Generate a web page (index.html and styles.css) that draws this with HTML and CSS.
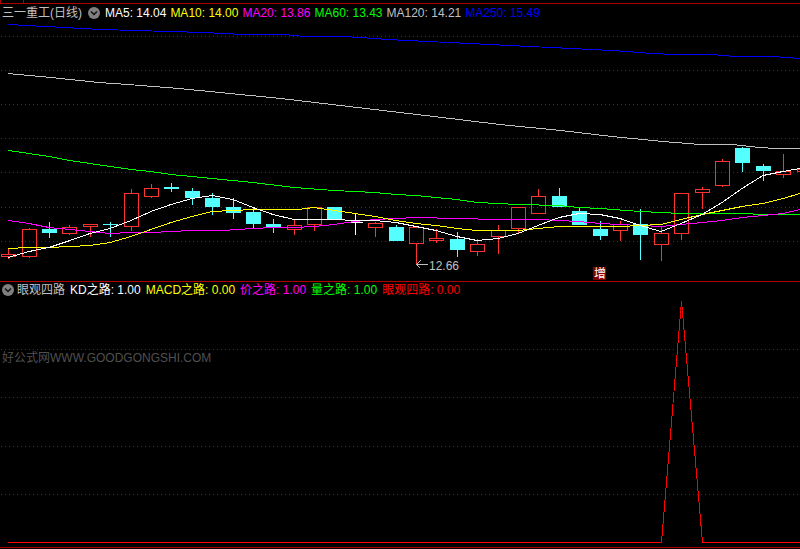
FILE: index.html
```html
<!DOCTYPE html>
<html lang="zh-CN">
<head>
    <meta charset="UTF-8">
    <meta name="viewport" content="width=device-width, initial-scale=1.0">
    <title>三一重工(日线)</title>
    <link rel="stylesheet" href="styles.css">
</head>
<body>
    <div class="top-strip"><span class="top-tab"></span></div>

    <section class="panel">
        <header class="panel-header main-header">
            <h1 class="name">三一重工(日线)</h1>
            <button class="toggle" type="button" aria-label="主图指标">
                <svg viewBox="0 0 12 12" width="12" height="12"><circle cx="6" cy="6" r="6"/><path d="M3 4.5l3 3 3-3"/></svg>
            </button>
            <span class="value white">MA5: 14.04</span>
            <span class="value yellow">MA10: 14.00</span>
            <span class="value magenta">MA20: 13.86</span>
            <span class="value green">MA60: 13.43</span>
            <span class="value silver">MA120: 14.21</span>
            <span class="value blue">MA250: 15.49</span>
        </header>
        <svg class="chart" viewBox="0 22 800 259">
            <g class="grid">
                <path d="M1 36.5H800M1 70.5H800M1 104.5H800M1 138.5H800M1 172.5H800M1 207.5H800M1 241.5H800"/>
            </g>
            <g id="candles"></g>
            <g class="lines">
                <polyline class="ma250" points="8,24.5 101,29.5 204,32.5 244,34.5 283,34.5 306,36.5 345,36.5 388,39.5 428,41.5 490,44.5 530,46.5 571,48.5 612,50.5 653,53.5 673,54.5 712,54.5 735,56.5 773,56.5 800,58.5"/>
                <polyline class="ma120" points="8,73.5 51,77.5 99,82.5 128,84.5 179,88.5 230,93.5 281,98.5 332,104.5 383,110.5 434,116.5 500,124.5 561,130.5 612,136.5 663,141.5 700,144.5 732,144.5 760,147.5 776,148.5 800,148.5"/>
                <polyline class="ma60" points="8,150.5 29,153.5 49,156.5 70,160.5 90,163.5 110,166.5 131,169.5 151,171.5 171,174.5 192,176.5 212,178.5 253,182.5 294,187.5 334,190.5 375,192.5 396,194.5 416,195.5 436,197.5 457,199.5 477,202.5 498,203.5 518,204.5 559,205.5 579,207.5 600,208.5 640,211.5 661,212.5 681,213.5 742,213.5 763,214.5 800,214.5"/>
                <polyline class="ma20" points="8,220.5 29,223.5 49,227.5 70,229.5 90,231.5 110,233.5 131,232.5 151,232.5 171,231.5 192,230.5 223,230.5 253,228.5 273,227.5 294,227.5 314,226.5 334,224.5 355,221.5 375,219.5 396,218.5 416,217.5 457,218.5 498,219.5 538,219.5 559,220.5 579,221.5 600,223.5 620,224.5 640,225.5 661,226.5 681,224.5 702,222.5 722,220.5 742,217.5 763,215.5 783,213.5 800,209.5"/>
                <polyline class="ma10" points="8,248.5 29,247.5 49,247.5 70,246.5 90,245.5 110,242.5 131,236.5 151,229.5 171,222.5 192,216.5 212,211.5 233,210.5 253,209.5 298,209.5 314,207.5 334,210.5 355,213.5 375,216.5 396,220.5 416,223.5 436,225.5 457,228.5 477,230.5 518,230.5 538,228.5 559,226.5 620,226.5 640,225.5 661,224.5 681,219.5 702,214.5 722,210.5 742,206.5 763,203.5 783,198.5 800,193.5"/>
                <polyline class="ma5" points="8,257.5 29,251.5 49,247.5 70,240.5 90,233.5 110,228.5 131,220.5 151,211.5 171,204.5 192,198.5 212,195.5 233,199.5 253,207.5 273,214.5 294,219.5 334,219.5 355,220.5 375,220.5 396,222.5 416,226.5 436,230.5 457,236.5 477,240.5 498,238.5 518,233.5 538,225.5 559,217.5 579,213.5 600,214.5 620,218.5 640,225.5 661,231.5 681,223.5 702,214.5 722,202.5 742,188.5 763,175.5 783,171.5 800,168.5"/>
            </g>
            <path class="arrow" d="M416 264.5h12M420.5 260.5l-4 4 4 4"/>
            <text class="low" x="429" y="270">12.66</text>
            <rect class="flag" x="593" y="267" width="13" height="13"/>
            <text class="flag-text" x="594" y="278">增</text>
        </svg>
    </section>

    <section class="panel sub-panel">
        <header class="panel-header sub-header">
            <button class="toggle" type="button" aria-label="副图指标">
                <svg viewBox="0 0 12 12" width="12" height="12"><circle cx="6" cy="6" r="6"/><path d="M3 4.5l3 3 3-3"/></svg>
            </button>
            <h2 class="name">眼观四路</h2>
            <span class="value white">KD之路: 1.00</span>
            <span class="value yellow">MACD之路: 0.00</span>
            <span class="value magenta">价之路: 1.00</span>
            <span class="value green">量之路: 1.00</span>
            <span class="value red">眼观四路: 0.00</span>
        </header>
        <svg class="chart" viewBox="0 300 800 247">
            <g class="grid">
                <path d="M1 349.5H800M1 397.5H800M1 446.5H800M1 494.5H800"/>
            </g>
            <polyline class="signal" points="8,542.5 661.5,542.5 681.5,301 702.5,542.5 800,542.5"/>
        </svg>
        <p class="watermark">好公式网WWW.GOODGONGSHI.COM</p>
    </section>

    <script src="chart.js"></script>
</body>
</html>
```

FILE: styles.css
```css
body {
    margin: 0;
    background-color: #000;
    color: #c0c0c0;
    font-family: "Liberation Sans", Arial, "Noto Sans CJK SC", sans-serif;
    font-size: 12px;
}

.top-strip {
    height: 3px;
    border-left: 1px solid #b00000;
    border-bottom: 1px solid #b00000;
}

.top-tab {
    display: block;
    width: 22px;
    height: 3px;
    border-right: 1px solid #b00000;
}

.panel {
    position: relative;
}

.sub-panel {
    border-top: 1px solid #b00000;
    border-bottom: 1px solid #b00000;
}

.panel-header {
    display: flex;
    align-items: center;
    box-sizing: border-box;
    height: 18px;
    padding-left: 2px;
    line-height: 16px;
    white-space: nowrap;
}

.main-header {
    gap: 4px;
}

.main-header .toggle {
    margin: 0 1px 0 2px;
}

.sub-header {
    gap: 5px;
    padding-bottom: 2px;
}

.sub-header .toggle {
    margin-right: -2px;
}

.name {
    margin: 0;
    font-size: 12px;
    font-weight: normal;
}

.toggle {
    display: flex;
    padding: 0;
    border: none;
    background: none;
    cursor: pointer;
}

.toggle circle {
    fill: #808080;
}

.toggle path {
    fill: none;
    stroke: #111;
    stroke-width: 1.5;
}

.white {
    color: #fff;
}

.yellow {
    color: #ff0;
}

.magenta {
    color: #f0f;
}

.green {
    color: #0f0;
}

.silver {
    color: #c0c0c0;
}

.blue {
    color: #00f;
}

.red {
    color: #f00;
}

.chart {
    display: block;
    width: 100%;
    shape-rendering: crispEdges;
}

.grid path {
    stroke: #b00000;
    stroke-dasharray: 1 3;
}

.lines polyline,
.signal,
.arrow {
    fill: none;
    stroke-width: 1;
}

.ma5 {
    stroke: #fff;
}

.ma10 {
    stroke: #ff0;
}

.ma20 {
    stroke: #f0f;
}

.ma60 {
    stroke: #0f0;
}

.ma120 {
    stroke: #c0c0c0;
}

.ma250 {
    stroke: #00f;
}

.signal {
    stroke: #f00;
}

.up {
    fill: none;
    stroke: #ff3232;
}

.down {
    fill: #54ffff;
}

.flat {
    fill: #fff;
}

.arrow {
    stroke: #c0c0c0;
}

.low {
    fill: #c0c0c0;
    font-size: 12px;
}

.flag {
    fill: #800000;
}

.flag-text {
    fill: #fff;
    font-size: 12px;
}

.watermark {
    position: absolute;
    top: 67px;
    left: 2px;
    margin: 0;
    color: #505050;
    line-height: 18px;
}
```

FILE: chart.js
```javascript
// x, high, body top, body bottom, low, type
const candles = [
    [8, 248, 254, 256, 258, "up"],
    [29, 228, 229, 256, 257, "up"],
    [49, 222, 229, 232, 237, "down"],
    [69, 225, 227, 233, 234, "up"],
    [90, 224, 224, 226, 236, "up"],
    [110, 222, 224, 224, 236, "down"],
    [131, 189, 193, 226, 230, "up"],
    [151, 184, 188, 196, 197, "up"],
    [171, 183, 187, 188, 191, "down"],
    [192, 188, 191, 197, 204, "down"],
    [212, 193, 198, 206, 214, "down"],
    [233, 198, 207, 212, 218, "down"],
    [253, 207, 212, 223, 227, "down"],
    [273, 219, 224, 226, 232, "down"],
    [294, 220, 225, 229, 234, "up"],
    [314, 207, 207, 224, 230, "up"],
    [334, 207, 207, 218, 219, "down"],
    [355, 213, 222, 222, 234, "flat"],
    [375, 222, 223, 227, 236, "up"],
    [396, 225, 227, 240, 240, "down"],
    [416, 227, 227, 243, 264, "up"],
    [436, 229, 238, 240, 242, "up"],
    [457, 232, 239, 249, 256, "down"],
    [477, 239, 244, 251, 255, "up"],
    [498, 225, 230, 236, 253, "up"],
    [518, 207, 207, 228, 232, "up"],
    [538, 189, 196, 213, 213, "up"],
    [559, 188, 196, 206, 206, "down"],
    [579, 208, 211, 224, 224, "down"],
    [600, 221, 229, 235, 239, "down"],
    [620, 221, 224, 230, 240, "up"],
    [640, 209, 224, 234, 259, "down"],
    [661, 226, 233, 244, 260, "up"],
    [681, 193, 193, 233, 239, "up"],
    [702, 187, 189, 192, 208, "up"],
    [722, 159, 161, 185, 186, "up"],
    [742, 147, 148, 162, 171, "down"],
    [763, 164, 166, 170, 180, "down"],
    [783, 154, 171, 174, 177, "up"],
    [804, 168, 169, 171, 172, "up"]
];

function drawCandle([x, high, top, bottom, low, type]) {
    if (type === "up") {
        return `<path class="up" d="M${x - 6.5} ${top + 0.5}h14v${bottom - top}h-14zM${x + 0.5} ${high}V${top}M${x + 0.5} ${bottom}V${low + 1}"/>`;
    }
    return `<path class="${type}" d="M${x - 7} ${top}h15v${bottom - top + 1}h-15zM${x} ${high}h1v${low - high + 1}h-1z"/>`;
}

document.getElementById("candles").innerHTML = candles.map(drawCandle).join("");
```
